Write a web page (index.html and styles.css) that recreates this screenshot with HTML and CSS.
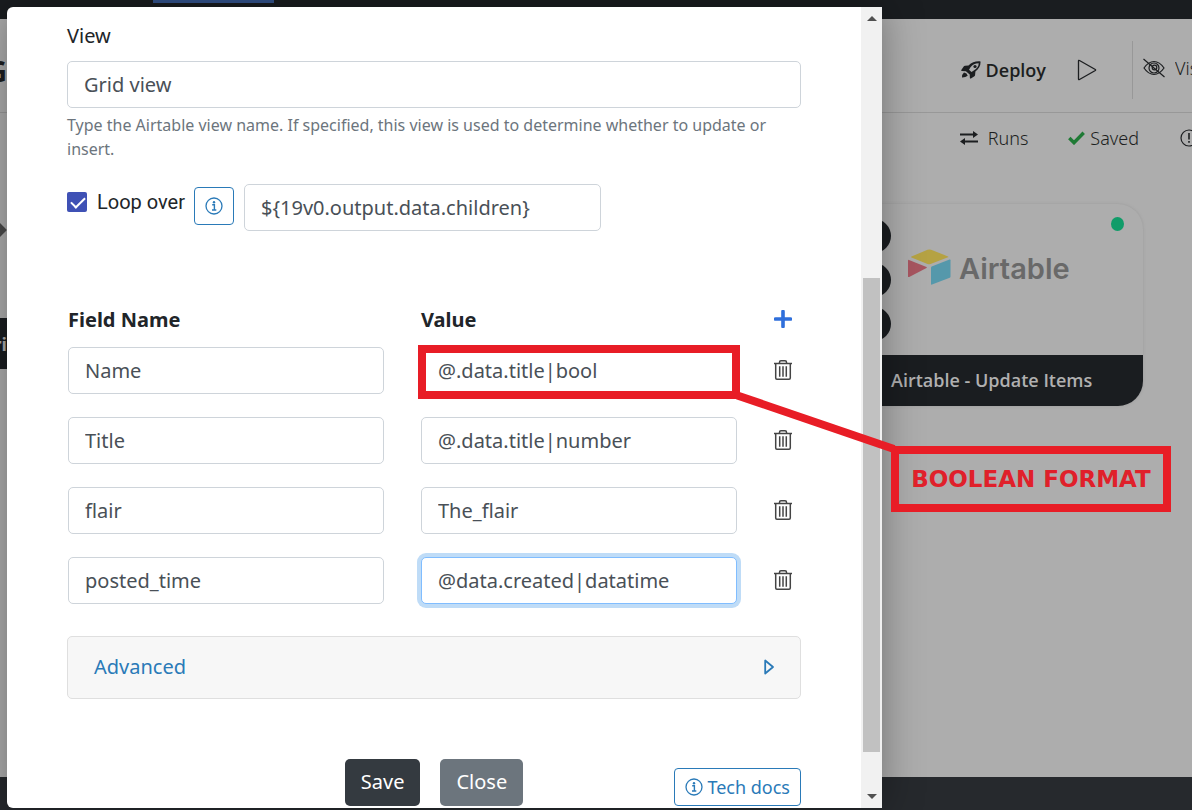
FILE: index.html
```html
<!DOCTYPE html>
<html lang="en">
<head>
    <meta charset="UTF-8">
    <meta name="viewport" content="width=device-width, initial-scale=1.0">
    <title>Airtable - Update Items</title>
    <link rel="stylesheet" href="styles.css">
</head>
<body>

    <!-- icons used more than once -->
    <svg class="defs" aria-hidden="true">
        <symbol id="trash" viewBox="0 0 18 20">
            <path d="M0 3.500h18M5.500 3.200V2.200Q5.500.8 7 .8h4q1.500 0 1.500 1.400v1M1.700 3.500V18q0 1.200 1.200 1.200h12.200q1.200 0 1.200-1.200V3.500M5.700 6.200v10.600M9 6.200v10.600M12.300 6.200v10.600" fill="none" stroke="#444" stroke-width="1.500"/>
        </symbol>
        <symbol id="info" viewBox="0 0 18 18">
            <circle cx="9" cy="9" r="8" fill="none" stroke="currentColor" stroke-width="1.300"/>
            <circle cx="9" cy="5.200" r="1.200" fill="currentColor"/>
            <path d="M7.200 7.800h2.200v5M7 13h4.300" fill="none" stroke="currentColor" stroke-width="1.400"/>
        </symbol>
    </svg>

    <div class="app">
        <div class="topbar"><div class="tab-line"></div></div>

        <header class="header">
            <div class="edge title">G</div>
            <button class="deploy">
                <svg width="20" height="18" viewBox="0 0 20 18">
                    <path fill="#1c1e20" fill-rule="evenodd" d="M19.500.4C14.500 0 11 1.300 7.500 4.600L4 4.800Q3.200 4.900 2.700 5.500L.3 9q-.5.900.6 1l4 .3 3.800 3.300.2 3.400q.1.900 1 .5l3.500-2.200q.6-.4.700-1.200l.3-3.500C18 7.700 19.800 5 19.500.4zM17.700 2.200C17.700 5.200 16 7.500 12.800 9.600L10.500 11 8 8.700 9.500 6.300C11.500 3.500 14.200 2.200 17.700 2.200zM3 11.500Q1 13 1 16.500q3.500.1 5.700-1.700L5.500 12.500z"/>
                    <circle cx="14" cy="5.500" r="1.600" fill="#1c1e20"/>
                </svg>
                Deploy
            </button>
            <button class="play" aria-label="Run">
                <svg width="20" height="22" viewBox="0 0 20 22"><path d="M1.500 2v18q0 1 1 .5l15.800-9q.7-.5 0-1l-15.800-9q-1-.5-1 .5z" fill="none" stroke="#1c1e20" stroke-width="1.300"/></svg>
            </button>
            <div class="divider"></div>
            <button class="visibility">
                <svg width="22" height="20" viewBox="0 0 22 20">
                    <g fill="none" stroke="#1c1e20" stroke-width="1.200">
                        <path d="M1 10Q5.500 3.500 11 3.500T21 10Q16.500 16.500 11 16.500T1 10zM.5 1L21.500 19"/>
                        <circle cx="11" cy="10" r="5"/><circle cx="11.500" cy="9.500" r="2.300"/>
                    </g>
                </svg>
                <span>Vis</span>
            </button>
        </header>

        <div class="subbar">
            <button class="runs">
                <svg width="18" height="14" viewBox="0 0 18 14"><path d="M0 3.500h14M4 10.500h14" stroke="#1c1e20" stroke-width="2"/><path d="M13 0l5 3.500L13 7zM5 7L0 10.500 5 14z" fill="#1c1e20"/></svg>
                Runs
            </button>
            <div class="saved">
                <svg width="17" height="14" viewBox="0 0 17 14"><path d="M1.300 7L6 11.700 15.700 1.700" fill="none" stroke="#1f7a35" stroke-width="3.400"/></svg>
                Saved
            </div>
            <div class="warn">
                <svg width="18" height="18" viewBox="0 0 18 18"><circle cx="9" cy="9" r="8" fill="none" stroke="#1c1e20" stroke-width="1.200"/><path d="M9 4v6.500M9 12v1.800" stroke="#1c1e20" stroke-width="1.600"/></svg>
            </div>
        </div>

        <main class="canvas">
            <div class="arrow"></div>
            <div class="edge node-left">ri</div>
            <div class="node">
                <div class="node-body">
                    <svg width="43" height="36" viewBox="0 0 43 36">
                        <path d="M19.500.8q1.800-.6 3.600 0L40 7.400q.8.500 0 .9L22.500 15q-1.500.5-3 0L3.500 8.500q-.9-.5 0-1z" fill="#b5a243"/>
                        <path d="M0 11.500q0-1 1-.6l17.500 7.200q.8.500 0 1L1.200 28q-1.200.4-1.200-.6z" fill="#a75560"/>
                        <path d="M23 18.500q0-.8.700-1.100L41.500 10.600q1-.3 1 .6V27.500q0 .8-.8 1.200L24 35.600q-1 .3-1-.6z" fill="#5598ab"/>
                    </svg>
                    <span class="brand">Airtable</span>
                    <span class="status"></span>
                </div>
                <div class="node-title">Airtable - Update Items</div>
            </div>
            <div class="ports"><i></i><i></i><i></i></div>
        </main>

        <footer class="bottombar"></footer>
    </div>

    <div class="modal" role="dialog" aria-label="Update Items">
        <form class="modal-content">
            <label class="label" for="view">View</label>
            <input type="text" id="view" value="Grid view">
            <p class="help">Type the Airtable view name. If specified, this view is used to determine whether to update or insert.</p>

            <div class="loop">
                <label class="loop-label"><input type="checkbox" checked>Loop over</label>
                <button type="button" class="outline info-btn" aria-label="Info"><svg width="18" height="18"><use href="#info"/></svg></button>
                <input type="text" class="loop-value" aria-label="Loop over value" value="${19v0.output.data.children}">
            </div>

            <div class="fields">
                <b>Field Name</b>
                <b>Value</b>
                <button type="button" class="icon-btn" aria-label="Add field">
                    <svg width="18" height="18" viewBox="0 0 18 18"><path d="M9 1.500v15M1.500 9h15" stroke="#2f6fdb" stroke-width="3.600" stroke-linecap="round"/></svg>
                </button>

                <input type="text" aria-label="Field name 1" value="Name">
                <div class="value">
                    <input type="text" aria-label="Value 1" value="@.data.title|bool">
                    <div class="frame"></div>
                    <svg class="pointer" width="160" height="64" viewBox="0 0 160 64"><path d="M0 4L158 58" stroke="#e81d26" stroke-width="8"/></svg>
                    <div class="callout">BOOLEAN FORMAT</div>
                </div>
                <button type="button" class="icon-btn" aria-label="Delete"><svg width="18" height="20"><use href="#trash"/></svg></button>

                <input type="text" aria-label="Field name 2" value="Title">
                <input type="text" aria-label="Value 2" value="@.data.title|number">
                <button type="button" class="icon-btn" aria-label="Delete"><svg width="18" height="20"><use href="#trash"/></svg></button>

                <input type="text" aria-label="Field name 3" value="flair">
                <input type="text" aria-label="Value 3" value="The_flair">
                <button type="button" class="icon-btn" aria-label="Delete"><svg width="18" height="20"><use href="#trash"/></svg></button>

                <input type="text" aria-label="Field name 4" value="posted_time">
                <input type="text" class="focused" aria-label="Value 4" value="@data.created|datatime">
                <button type="button" class="icon-btn" aria-label="Delete"><svg width="18" height="20"><use href="#trash"/></svg></button>
            </div>

            <button type="button" class="advanced">
                Advanced
                <svg width="10" height="16" viewBox="0 0 10 16"><path d="M1.200 1.500v13L9 8z" fill="none" stroke="#2a7ab8" stroke-width="1.800" stroke-linejoin="round"/></svg>
            </button>

            <div class="actions">
                <div class="buttons">
                    <button type="button" class="btn save">Save</button>
                    <button type="button" class="btn close">Close</button>
                </div>
                <a href="#" class="outline docs"><svg width="18" height="18"><use href="#info"/></svg>Tech docs</a>
            </div>
        </form>

        <div class="scrollbar">
            <span class="up"></span>
            <div class="track"><div class="thumb"></div></div>
            <span class="down"></span>
        </div>
    </div>

</body>
</html>
```
FILE: styles.css
```css
* { box-sizing: border-box; }
body {
    margin: 0;
    overflow: hidden;
    font-family: "Noto Sans", "Open Sans", sans-serif;
    font-size: 20px;
    color: #212529;
}
button, input { font: inherit; color: inherit; }
button { padding: 0; border: none; background: none; cursor: pointer; }
svg { display: block; flex: none; }
.defs { position: absolute; width: 0; height: 0; }

/* page behind the dialog */
.app { display: flex; flex-direction: column; height: 100vh; background: #adadad; font-size: 18px; color: #1c1e20; }
.topbar { height: 19px; background: #1a1d20; padding-left: 153px; }
.tab-line { width: 121px; height: 3px; background: #33538c; }
.header { display: flex; align-items: center; justify-content: flex-end; height: 94px; border-bottom: 1px solid #989898; }
.header button, .subbar button, .saved { display: flex; align-items: center; }
.edge { display: flex; justify-content: flex-end; width: 7px; overflow: hidden; font-weight: bold; }
.title { margin: 10px auto 0 0; font-size: 28px; }
.header .deploy { gap: 5px; margin-top: 8px; font: 600 18px "Open Sans", sans-serif; }
.play { margin: 8px 35px 0 31px; }
.divider { width: 1px; height: 58px; margin-top: 8px; background: #989898; }
.visibility { gap: 10px; margin: 4px 0 0 10px; font-weight: 300; }
.visibility span { width: 17px; overflow: hidden; }
.subbar { display: flex; align-items: center; justify-content: flex-end; height: 50px; font-weight: 300; }
.runs { gap: 10px; }
.saved { gap: 5px; margin-left: 40px; }
.warn { width: 12px; margin-left: 41px; overflow: hidden; }
.canvas { position: relative; flex: 1; }
.arrow { position: absolute; left: -10px; top: 60px; width: 14px; height: 14px; background: #4a4a4a; transform: rotate(45deg); }
.node-left { position: absolute; left: 0; top: 155px; height: 51px; align-items: center; background: #1a1d20; color: #adadad; }
.node { position: absolute; right: 49px; top: 41px; width: 300px; border-radius: 25px; overflow: hidden; box-shadow: 0 0 3px #999; }
.node-body { position: relative; display: flex; gap: 8px; height: 151px; padding: 45px 0 0 65px; }
.brand { font: 600 29px/40px Inter, sans-serif; color: #696969; }
.status { position: absolute; right: 19px; top: 13px; width: 13px; height: 14px; border-radius: 50%; background: #109c69; }
.node-title { padding-left: 48px; font: 600 18px/51px "Open Sans", sans-serif; background: #1a1d20; color: #b0b0b0; }
.ports { position: absolute; right: 301px; top: 56px; display: grid; gap: 10px; }
.ports i { width: 34px; height: 34px; border-radius: 50%; background: #1a1d20; }
.bottombar { height: 33px; background: #26292d; }

/* dialog */
.modal {
    position: absolute;
    top: 7px;
    bottom: 2px;
    left: 7px;
    display: flex;
    width: 875px;
    max-width: calc(100% - 14px);
    border-radius: 6px;
    background: #fff;
    box-shadow: 0 0 40px rgba(0, 0, 0, 0.35);
}
.modal-content { flex: 1; padding: 14px 60px 2px; }
.label { display: block; margin-bottom: 10px; line-height: 30px; }
input[type=text] {
    display: block;
    width: 100%;
    height: 47px;
    padding: 0 16px;
    border: 1px solid #ced4da;
    border-radius: 5px;
    background: #fff;
    color: #495057;
    outline: none;
}
.help { margin: 5px 0 23px; font-size: 16px; line-height: 24px; color: #6c757d; }
.loop { display: flex; align-items: center; }
.loop-label { display: flex; align-items: center; gap: 10px; margin: 0 9px 12px 0; font-family: Roboto, sans-serif; }
.loop-label input {
    appearance: none;
    width: 20px;
    height: 20px;
    margin: 0;
    border-radius: 2px;
    background: #3f51b5;
}
.loop-label input:checked::before {
    content: "";
    display: block;
    width: 6px;
    height: 12px;
    margin: 2px 0 0 7px;
    border: solid #fff;
    border-width: 0 2px 2px 0;
    transform: rotate(45deg);
}
.outline { display: flex; align-items: center; justify-content: center; height: 38px; border: 1px solid #2a7ab8; border-radius: 4px; color: #2a7ab8; text-decoration: none; }
.info-btn { width: 40px; margin: 0 10px 4px 0; }
.loop input.loop-value { width: 357px; }

.fields { display: grid; grid-template-columns: 1fr 1fr 17px; gap: 23px 37px; margin-top: 74px; padding: 0 10px 0 1px; }
.fields b { margin-bottom: -11px; font-weight: 700; line-height: 30px; }
.icon-btn { display: flex; align-items: center; justify-content: center; padding-bottom: 2px; }
.fields b + .icon-btn { margin-bottom: -11px; }
.fields input.focused { border-color: #80bdff; box-shadow: 0 0 0 4px #bfdcf7; }
.value { position: relative; }
.frame { position: absolute; inset: -2px -3px -5px; border: 8px solid #e81d26; }
.pointer { position: absolute; left: 315px; top: 44px; z-index: 1; }
.callout {
    position: absolute;
    left: 470px;
    top: 99px;
    z-index: 1;
    width: 280px;
    border: 8px solid #e81d26;
    font: bold 23px/50px "DejaVu Sans", sans-serif;
    text-align: center;
    white-space: nowrap;
    color: #e0202a;
}

.advanced {
    display: flex;
    align-items: center;
    justify-content: space-between;
    width: 100%;
    height: 63px;
    margin-top: 32px;
    padding: 0 26px 2px;
    border: 1px solid #dfdfdf;
    border-radius: 5px;
    background: #f7f7f7;
    color: #2a7ab8;
}
.actions { display: grid; grid-template-columns: 1fr auto 1fr; align-items: end; margin-top: 60px; }
.buttons { display: flex; gap: 20px; grid-column: 2; }
.btn { height: 47px; padding: 0 16px 2px; border-radius: 5px; color: #fff; }
.save { background: #343a40; }
.close { background: #6c757d; }
.docs { justify-self: end; gap: 4px; padding: 0 10px; font-size: 18px; }

.scrollbar { display: flex; flex-direction: column; align-items: center; width: 21px; padding: 9px 0; background: #f1f1f1; }
.track { flex: 1; width: 17px; padding-top: 257px; }
.thumb { height: 474px; background: #c1c1c1; }
.up, .down { border: 5px solid transparent; }
.up { border-top: none; border-bottom-color: #505050; }
.down { border-bottom: none; border-top-color: #505050; }
```
